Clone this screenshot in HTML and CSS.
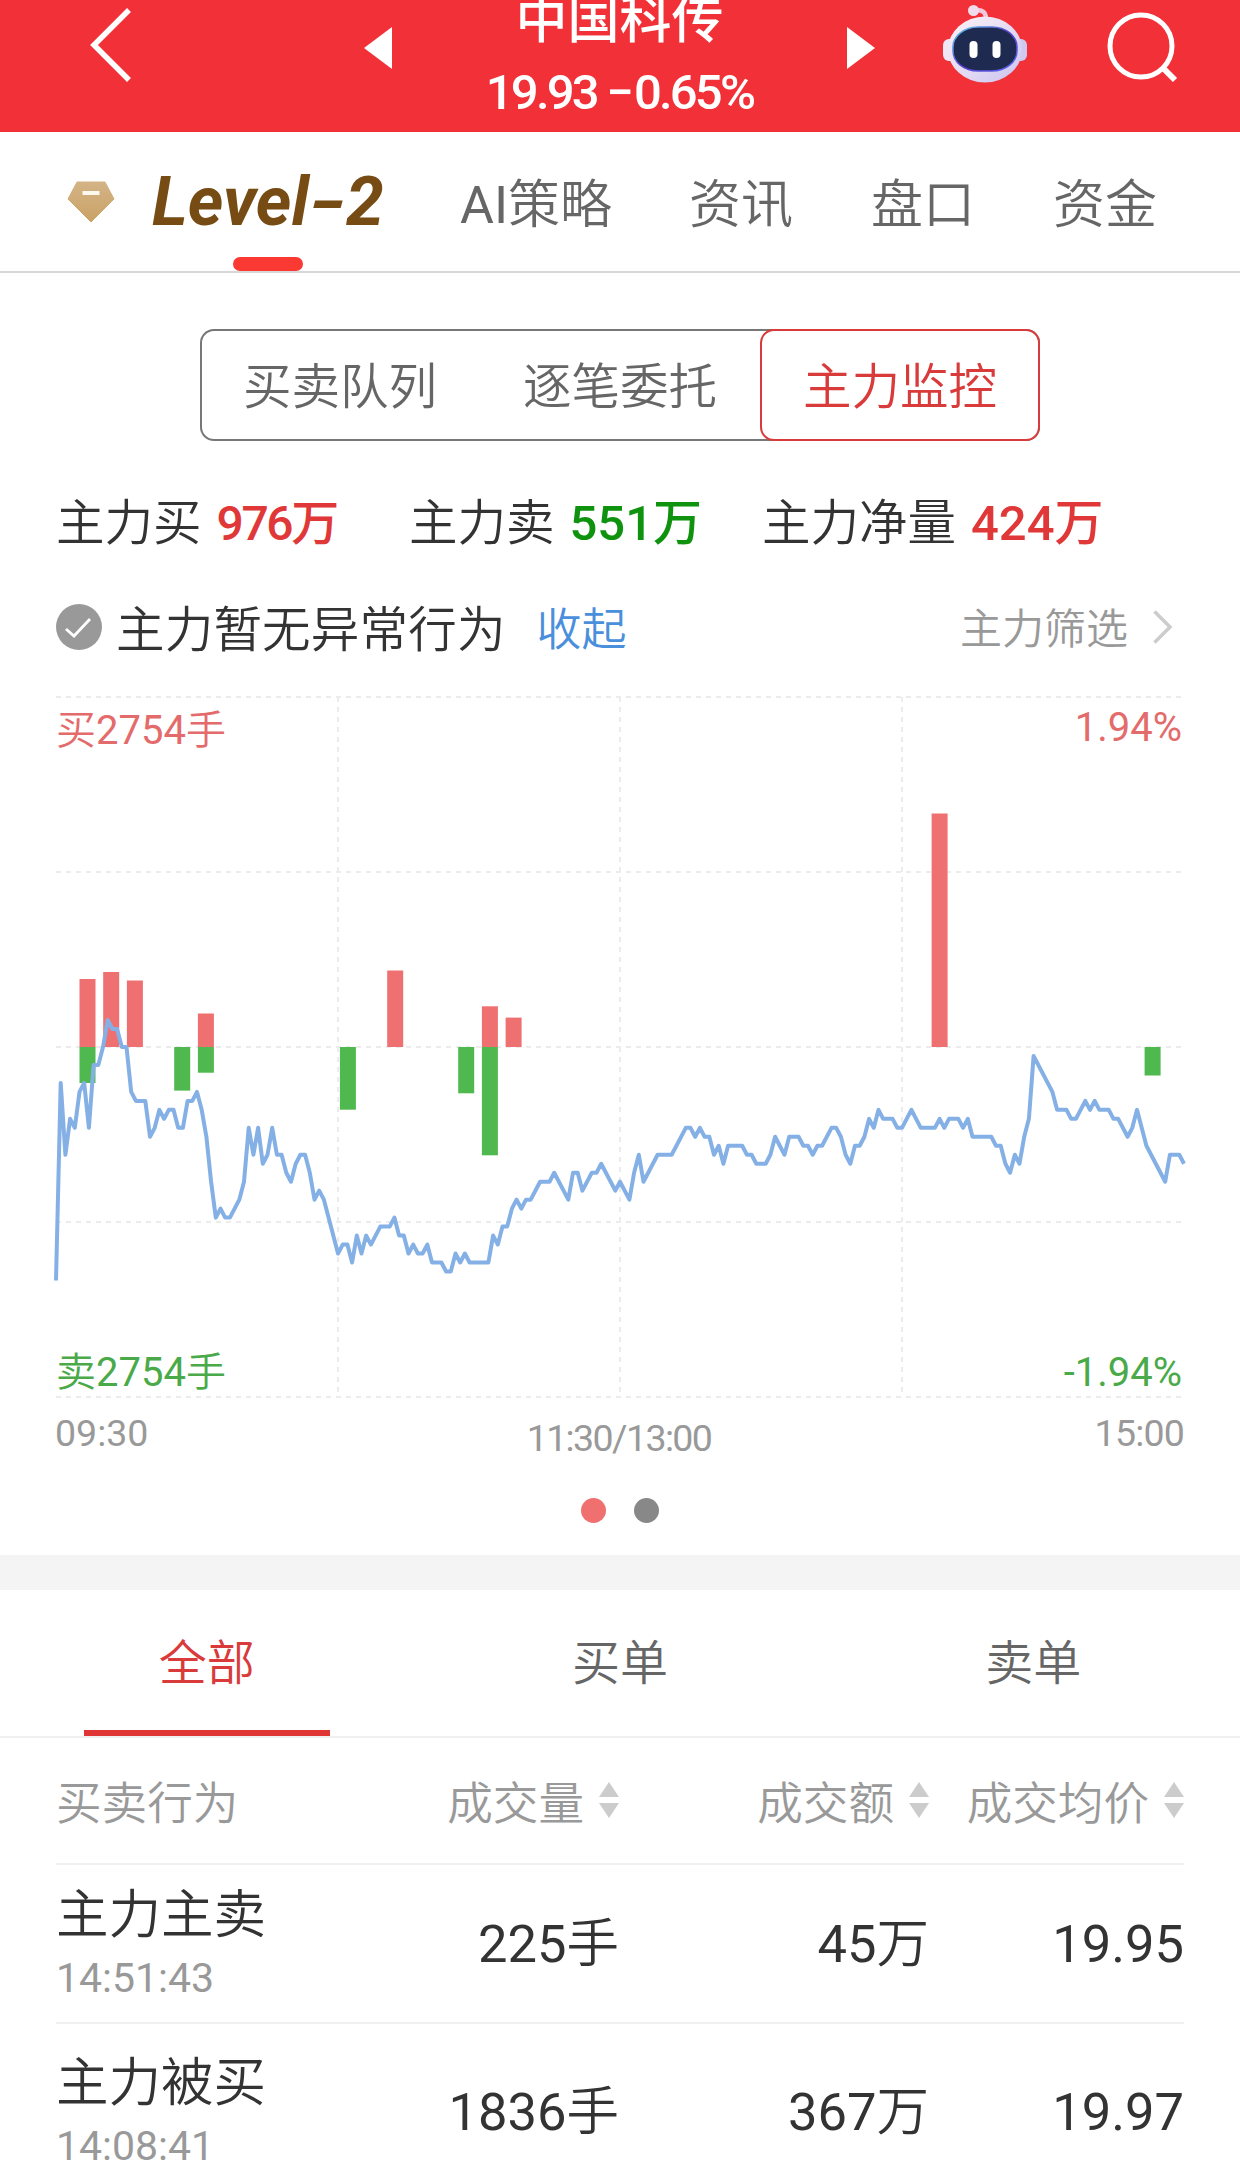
FILE: index.html
```html
<!DOCTYPE html>
<html lang="zh-CN">
<head>
  <meta charset="UTF-8" />
  <meta name="viewport" content="width=device-width, initial-scale=1.0"/>
  <title>中国科传 Level-2</title>
  <link rel="stylesheet" href="styles.css">
</head>
<body>

  <header class="header">
    <svg class="back" viewBox="0 0 50 80"><path d="M41 5 L6 40 L41 75" fill="none" stroke="#fff" stroke-width="5.5"/></svg>
    <svg class="prev" viewBox="0 0 28 42"><path d="M28 0 L0 21 L28 42 Z" fill="#fff"/></svg>
    <div class="stock">
      <div class="stock-name">中国科传</div>
      <div class="stock-price">19.93 <span class="minus">−</span>0.65%</div>
    </div>
    <svg class="next" viewBox="0 0 28 42"><path d="M0 0 L28 21 L0 42 Z" fill="#fff"/></svg>
    <svg class="robot" viewBox="0 0 84 78">
      <defs>
        <linearGradient id="shell" x1="0" y1="0" x2="1" y2="1">
          <stop offset="0" stop-color="#fdf3f6"/>
          <stop offset="0.55" stop-color="#e3daf3"/>
          <stop offset="1" stop-color="#c9c3f0"/>
        </linearGradient>
        <linearGradient id="rim" x1="0" y1="0" x2="1" y2="1">
          <stop offset="0" stop-color="#5fd0e8"/>
          <stop offset="0.5" stop-color="#5a3fd0"/>
          <stop offset="1" stop-color="#5b6bf0"/>
        </linearGradient>
      </defs>
      <path d="M30 6 Q43 3 43 14" fill="none" stroke="#f3c9da" stroke-width="4.5"/>
      <circle cx="30.500" cy="5.500" r="5.500" fill="#f0dcec"/>
      <rect x="0" y="34" width="14" height="22" rx="6" fill="#efe6f6"/>
      <rect x="70" y="34" width="14" height="22" rx="6" fill="#cfc9f1"/>
      <ellipse cx="42" cy="44.500" rx="37" ry="33" fill="url(#shell)"/>
      <rect x="10" y="22" width="64" height="44" rx="25" ry="20" fill="#1f2a50" stroke="url(#rim)" stroke-width="1.5"/>
      <rect x="26.500" y="36" width="8" height="17" rx="4" fill="#fff"/>
      <rect x="49.500" y="36" width="8" height="17" rx="4" fill="#fff"/>
    </svg>
    <svg class="search" viewBox="0 0 72 72" fill="none" stroke="#fff" stroke-width="5">
      <circle cx="34" cy="34" r="31"/>
      <path d="M55 55 L68 68" stroke-width="6"/>
    </svg>
  </header>

  <nav class="tabs">
    <svg class="diamond" viewBox="0 0 48 42">
      <defs>
        <linearGradient id="gold" x1="0" y1="0" x2="0" y2="1">
          <stop offset="0" stop-color="#d3b386"/>
          <stop offset="1" stop-color="#caa265"/>
        </linearGradient>
      </defs>
      <path d="M10 1 H38 L47 18 L24 41 L1 18 Z" fill="url(#gold)" stroke="url(#gold)" stroke-linejoin="round"/>
      <rect x="15.500" y="10" width="17" height="4" fill="#fff8ec"/>
    </svg>
    <div class="tab level2">Level<span class="dash">-</span>2</div>
    <div class="tab ai"><span class="num">AI</span>策略</div>
    <div class="tab">资讯</div>
    <div class="tab">盘口</div>
    <div class="tab">资金</div>
  </nav>

  <div class="segment">
    <div class="segment-item">买卖队列</div>
    <div class="segment-item">逐笔委托</div>
    <div class="segment-item active">主力监控</div>
  </div>

  <div class="stats">
    <div class="stat buy">主力买<b>976万</b></div>
    <div class="stat sell">主力卖<b>551万</b></div>
    <div class="stat net">主力净量<b>424万</b></div>
  </div>

  <div class="status">
    <svg class="check" viewBox="0 0 46 46">
      <circle cx="23" cy="23" r="23" fill="#999"/>
      <path d="M10 25 L18 32 L34 15" fill="none" stroke="#fff" stroke-width="2.8"/>
    </svg>
    <span class="status-text">主力暂无异常行为</span>
    <a class="toggle">收起</a>
    <span class="filter">主力筛选</span>
    <svg class="arrow" viewBox="0 0 20 34"><path d="M1.500 1.500 L17 17 L1.500 32.500" fill="none" stroke="#ccc" stroke-width="3.500"/></svg>
  </div>

  <svg class="chart" viewBox="0 0 1240 780">
    <!-- grid -->
    <g class="grid">
      <path d="M56 17 H1184 M56 192 H1184 M56 367 H1184 M56 542 H1184 M56 717 H1184"/>
      <path d="M338 17 V717 M620 17 V717 M902 17 V717"/>
    </g>

    <!-- buy volume -->
    <g class="bars-buy">
      <rect x="79.500" y="299" width="16" height="68"/>
      <rect x="103.200" y="292" width="16" height="75"/>
      <rect x="126.900" y="300.500" width="16" height="66.500"/>
      <rect x="197.900" y="333.500" width="16" height="33.500"/>
      <rect x="387.200" y="290.500" width="16" height="76.500"/>
      <rect x="481.900" y="326.300" width="16" height="40.700"/>
      <rect x="505.600" y="337.600" width="16" height="29.400"/>
      <rect x="931.600" y="133.500" width="16" height="233.500"/>
    </g>

    <!-- sell volume -->
    <g class="bars-sell">
      <rect x="79.500" y="367" width="16" height="36"/>
      <rect x="174.200" y="367" width="16" height="43.600"/>
      <rect x="197.900" y="367" width="16" height="25.700"/>
      <rect x="339.900" y="367" width="16" height="62.700"/>
      <rect x="458.200" y="367" width="16" height="46.300"/>
      <rect x="481.900" y="367" width="16" height="108.300"/>
      <rect x="1144.600" y="367" width="16" height="28.500"/>
    </g>

    <!-- price, x = minute of the session, y = ticks below previous close -->
    <g transform="translate(56 367) scale(4.700 8.980)">
      <polyline class="price" points="0,26 1,4 2,12 3,8 4,9 5,5 6,4 7,9 8,2 9,2 10,0 11,-3 12,-2 13,-2 14,0 15,0
        16,5 17,6 19,6 20,10 21,9 22,7 23,8 24,7 25,7 26,9 27,9 28,6 29,6 30,5 31,7 32,10 33,15 34,19 35,18
        36,19 37,19 39,17 40,15 41,9 42,12 43,9 44,13 45,12 46,9 47,12 48,12 49,14 50,15 51,13 52,12 53,12
        54,14 55,17 56,16 57,17 60,23 61,22 62,22 63,24 64,21 65,23 66,21 67,22 69,20 71,20 72,19 73,21
        74,21 75,23 76,22 77,23 78,23 79,22 80,24 82,24 83,25 84,25 85,23 86,24 87,23 88,24 92,24 93,21
        94,22 95,20 96,20 97,18 98,17 99,18 100,17 101,17 103,15 105,15 106,14 109,17 110,14 111,14 112,16
        114,14 115,14 116,13 119,16 120,15 122,17 123,14 124,12 125,15 128,12 131,12 134,9 135,9 136,10
        137,9 138,10 139,10 140,12 141,11 142,13 143,11 146,11 147,12 148,12 149,13 151,13 152,12 153,10
        155,12 156,10 158,10 159,11 160,11 161,12 162,11 163,11 165,9 166,9 167,10 168,12 169,13 170,11
        171,11 172,10 173,8 174,9 175,7 176,8 178,8 179,9 180,9 182,7 184,9 187,9 188,8 189,9 190,8 192,8
        193,9 194,8 195,10 199,10 200,11 201,11 202,13 203,14 204,12 205,13 206,10 207,8 208,1 212,5 213,7
        215,7 216,8 217,8 219,6 220,7 221,6 222,7 224,7 225,8 226,8 228,10 229,9 230,7 232,11 236,15
        237,12 239,12 240,13"/>
    </g>

    <g class="limit up">
      <text x="56" y="64">买<tspan class="num">2754</tspan>手</text>
      <text class="num" x="1182" y="61" text-anchor="end">1.94%</text>
    </g>
    <g class="limit down">
      <text x="56" y="706">卖<tspan class="num">2754</tspan>手</text>
      <text class="num" x="1182" y="706" text-anchor="end">-1.94%</text>
    </g>
    <g class="times num">
      <text x="55" y="766">09:30</text>
      <text class="noon" x="619" y="771" text-anchor="middle">11:30/13:00</text>
      <text class="close" x="1184" y="766" text-anchor="end">15:00</text>
    </g>
  </svg>

  <div class="dots">
    <i class="dot on"></i>
    <i class="dot"></i>
  </div>

  <div class="gap"></div>

  <div class="order-tabs">
    <div class="order-tab active">全部</div>
    <div class="order-tab">买单</div>
    <div class="order-tab">卖单</div>
  </div>

  <div class="orders">
    <div class="row head">
      <div class="cell">买卖行为</div>
      <div class="cell">成交量<svg class="sort" viewBox="0 0 20 36"><path d="M10 0 L20 15 H0 Z M10 36 L20 21 H0 Z"/></svg></div>
      <div class="cell">成交额<svg class="sort" viewBox="0 0 20 36"><path d="M10 0 L20 15 H0 Z M10 36 L20 21 H0 Z"/></svg></div>
      <div class="cell">成交均价<svg class="sort" viewBox="0 0 20 36"><path d="M10 0 L20 15 H0 Z M10 36 L20 21 H0 Z"/></svg></div>
    </div>
    <div class="row first">
      <div class="cell action">主力主卖<small class="num">14:51:43</small></div>
      <div class="cell"><span class="num">225</span>手</div>
      <div class="cell"><span class="num">45</span>万</div>
      <div class="cell num">19.95</div>
    </div>
    <div class="row">
      <div class="cell action">主力被买<small class="num">14:08:41</small></div>
      <div class="cell"><span class="num">1836</span>手</div>
      <div class="cell"><span class="num">367</span>万</div>
      <div class="cell num">19.97</div>
    </div>
  </div>

</body>
</html>
```
FILE: styles.css
```css
* {
  box-sizing: border-box;
}

body {
  margin: 0;
  width: 1240px;
  height: 2173px;
  overflow: hidden;
  background-color: #fff;
  color: #333;
  font-family: Roboto, "Noto Sans CJK SC", sans-serif;
  font-weight: 350;
  white-space: nowrap;
}

svg {
  display: block;
  flex: none;
}

.num {
  font-weight: 400;
}

/* header */
.header {
  display: flex;
  align-items: flex-start;
  height: 132px;
  background-color: #f13038;
  color: #fff;
}

.back {
  width: 50px;
  height: 80px;
  margin: 5px 0 0 88px;
}

.prev, .next {
  width: 28px;
  height: 42px;
  margin-top: 27px;
}

.prev {
  margin-left: 226px;
}

.stock {
  width: 455px;
  text-align: center;
}

.stock-name {
  height: 60px;
  margin-top: -9px;
  font-size: 52px;
  line-height: 60px;
  font-weight: 500;
}

.stock-price {
  font-size: 49px;
  line-height: 60px;
  margin-top: 12px;
  font-weight: 500;
  letter-spacing: -2.8px;
}

.minus {
  margin-right: 3px;
}

.robot {
  width: 84px;
  height: 78px;
  margin: 5px 0 0 68px;
}

.search {
  width: 72px;
  height: 72px;
  margin: 12px 0 0 80px;
}

/* top tabs */
.tabs {
  display: flex;
  align-items: center;
  height: 141px;
  padding-left: 67px;
  border-bottom: 2px solid #d8d8d8;
}

.diamond {
  width: 48px;
  height: 42px;
}

.tab {
  width: 104px;
  margin-right: 78px;
  padding-top: 9px;
  font-size: 52px;
  line-height: 130px;
  color: #666;
}

.level2 {
  position: relative;
  width: 234px;
  margin: 0 74px 0 37px;
  padding-top: 2px;
  font-size: 68px;
  line-height: 137px;
  font-weight: 700;
  font-style: italic;
  color: #764c14;
}

.dash {
  display: inline-block;
  margin: 0 5px 0 6px;
  transform: scaleX(1.5);
}

.level2::after {
  content: "";
  position: absolute;
  left: 81px;
  bottom: 0;
  width: 70px;
  height: 14px;
  border-radius: 7px;
  background-color: #fa3a32;
}

.ai {
  width: 151px;
}

/* segmented control */
.segment {
  display: flex;
  width: 840px;
  height: 112px;
  margin: 56px auto 0 200px;
  border-radius: 14px;
  box-shadow: inset 0 0 0 2px #777;
}

.segment-item {
  width: 280px;
  text-align: center;
  font-size: 48.5px;
  line-height: 118px;
  color: #666;
}

.segment-item.active {
  border: 2px solid #d93a3a;
  border-radius: 14px;
  background-color: #fff;
  line-height: 114px;
  color: #d93a3a;
}

/* summary */
.stats {
  display: flex;
  height: 80px;
  margin-top: 43px;
  padding-left: 56px;
  font-size: 48.5px;
  line-height: 80px;
}

.stat {
  width: 353px;
}

.stat b {
  margin-left: 15px;
  font-size: 49px;
  font-weight: 500;
  color: #e03838;
}

.stat.buy b {
  font-size: 48px;
  letter-spacing: -2.4px;
}

.stat.sell b {
  color: #0f930f;
}

.status {
  display: flex;
  align-items: center;
  height: 80px;
  margin-top: 23px;
  padding-left: 56px;
  font-size: 48.5px;
}

.check {
  width: 46px;
  height: 46px;
}

.status-text {
  margin-left: 14px;
  padding-bottom: 2px;
  letter-spacing: 0.2px;
}

.toggle {
  margin-left: 31px;
  padding-bottom: 2px;
  font-size: 45px;
  color: #4a8fdc;
}

.filter {
  margin-left: auto;
  padding-bottom: 3px;
  font-size: 42px;
  color: #999;
}

.arrow {
  width: 20px;
  height: 34px;
  margin: 0 67px 0 25px;
}

/* chart */
.chart {
  width: 1240px;
  height: 780px;
  margin-top: 13px;
}

.grid {
  fill: none;
  stroke: #ececec;
  stroke-width: 2;
  stroke-dasharray: 5 5;
}

.bars-buy {
  fill: #ef7070;
}

.bars-sell {
  fill: #4fb84f;
}

.price {
  fill: none;
  stroke: #84b0e6;
  stroke-width: 4;
  stroke-linejoin: round;
  vector-effect: non-scaling-stroke;
}

.limit {
  font-size: 40px;
}

.up {
  fill: #e46b6b;
}

.down {
  fill: #4aaa4a;
}

.times {
  font-size: 37.5px;
  fill: #999;
}

.noon {
  letter-spacing: -1.6px;
}

.close {
  letter-spacing: -0.8px;
}

.dots {
  display: flex;
  justify-content: center;
  gap: 28px;
  height: 95px;
  padding-top: 38px;
}

.dot {
  width: 25px;
  height: 25px;
  border-radius: 50%;
  background-color: #888;
}

.dot.on {
  background-color: #f07070;
}

.gap {
  height: 35px;
  background-color: #f4f4f4;
}

/* order list */
.order-tabs {
  display: flex;
  height: 148px;
  border-bottom: 2px solid #f0f0f0;
}

.order-tab {
  display: flex;
  flex-direction: column;
  align-items: center;
  flex: 1;
  font-size: 48px;
  line-height: 148px;
  color: #666;
}

.order-tab.active {
  color: #d93a3a;
}

.order-tab.active::after {
  content: "";
  width: 246px;
  height: 7px;
  margin-top: -8px;
  background-color: #e03535;
}

.orders {
  padding: 0 56px;
}

.row {
  display: grid;
  grid-template-columns: 260px 303px 310px 255px;
  align-items: start;
  height: 168px;
  padding-top: 9px;
  font-size: 52.5px;
  line-height: 158px;
}

.row.first {
  height: 159px;
  padding-top: 0;
  border-bottom: 2px solid #f0f0f0;
}

.cell {
  display: flex;
  justify-content: flex-end;
}

.cell:first-child {
  justify-content: flex-start;
}

.row.head {
  height: 127px;
  padding: 0;
  border-bottom: 2px solid #f0f0f0;
  font-size: 45.6px;
  line-height: 134px;
  color: #999;
}

.sort {
  width: 20px;
  height: 36px;
  margin: 44px 0 0 15px;
  fill: #ccc;
}

.action {
  flex-direction: column;
  padding-top: 15px;
  line-height: 70px;
}

.action small {
  font-size: 41px;
  line-height: 56px;
  color: #999;
}
```
